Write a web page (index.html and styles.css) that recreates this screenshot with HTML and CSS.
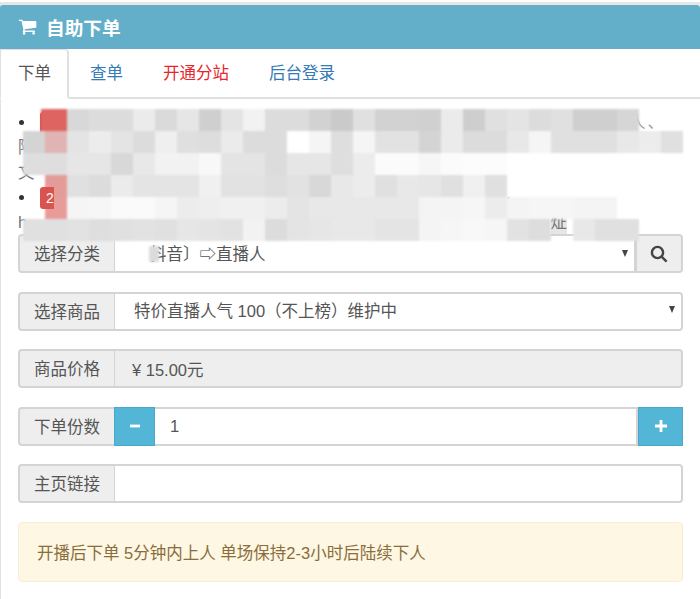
FILE: index.html
```html
<!DOCTYPE html>
<html lang="zh-CN">
<head>
<meta charset="utf-8">
<title>自助下单</title>
<link rel="stylesheet" href="styles.css">
</head>
<body>
<main class="panel">
  <h1 class="panel-heading">
    <svg class="cart" viewBox="0 0 1792 1792" aria-hidden="true"><path d="M704 1536q0 52-38 90t-90 38-90-38-38-90 38-90 90-38 90 38 38 90zm896 0q0 52-38 90t-90 38-90-38-38-90 38-90 90-38 90 38 38 90zm128-1088v512q0 24-16.5 42.5t-40.5 21.5l-1044 122q13 60 13 70 0 16-24 64h920q26 0 45 19t19 45-19 45-45 19h-1024q-26 0-45-19t-19-45q0-11 8-31.5t16-36 21.5-40 15.5-29.5l-177-823h-204q-26 0-45-19t-19-45 19-45 45-19h256q16 0 28.5 6.5t19.5 15.5 13 24.5 8 26 5.5 29.5 4.5 26h1201q26 0 45 19t19 45z"/></svg>
    <span>自助下单</span>
  </h1>
  <nav class="tabs">
    <a class="tab tab-active">下单</a>
    <a class="tab">查单</a>
    <a class="tab tab-red">开通分站</a>
    <a class="tab">后台登录</a>
  </nav>
  <section class="notice">
    <div class="line"><span class="bullet"></span><span class="badge">1</span><span class="grow"></span><span class="end-a">人、</span></div>
    <div class="line"><span>陆</span></div>
    <div class="line"><span>文</span></div>
    <div class="line"><span class="bullet"></span><span class="badge badge-top">2</span><span class="colon">:</span></div>
    <div class="line"><span>h</span><span class="grow"></span><span class="end-b">炡</span></div>
    <svg class="mosaic" viewBox="0 100 700 170" aria-hidden="true">
      <g>
        <rect x="44" y="110" fill="#dd6460"/><rect x="66" y="110" fill="#d8d8d8"/><rect x="88" y="110" fill="#dcdcdc"/><rect x="110" y="110" fill="#dcdcdc"/><rect x="132" y="110" fill="#ebebeb"/><rect x="154" y="110" fill="#dadada"/><rect x="176" y="110" fill="#e6e6e6"/><rect x="198" y="110" fill="#cfcfcf"/><rect x="220" y="110" fill="#e4e4e4"/><rect x="242" y="110" fill="#f2f2f2"/><rect x="264" y="110" fill="#dcdcdc"/><rect x="286" y="110" fill="#dcdcdc"/><rect x="308" y="110" fill="#d2d2d2"/><rect x="330" y="110" fill="#cacaca"/><rect x="352" y="110" fill="#e0e0e0"/><rect x="374" y="110" fill="#d2d2d2"/><rect x="396" y="110" fill="#d2d2d2"/><rect x="418" y="110" fill="#d0d0d0"/><rect x="440" y="110" fill="#ebebeb"/><rect x="462" y="110" fill="#cecece"/><rect x="484" y="110" fill="#e0e0e0"/><rect x="506" y="110" fill="#e4e4e4"/><rect x="528" y="110" fill="#dcdcdc"/><rect x="550" y="110" fill="#e0e0e0"/><rect x="572" y="110" fill="#cfcfcf"/><rect x="594" y="110" fill="#cfcfcf"/><rect x="616" y="110" fill="#d6d6d6"/>
      </g>
      <g>
        <rect x="22" y="132" fill="#d4d4d4"/><rect x="44" y="132" fill="#e0b4b2"/><rect x="66" y="132" fill="#e4e4e4"/><rect x="88" y="132" fill="#ececec"/><rect x="110" y="132" fill="#e4e4e4"/><rect x="132" y="132" fill="#dcdcdc"/><rect x="154" y="132" fill="#efefef"/><rect x="176" y="132" fill="#dfdfdf"/><rect x="198" y="132" fill="#dddddd"/><rect x="220" y="132" fill="#ebebeb"/><rect x="242" y="132" fill="#dcdcdc"/><rect x="264" y="132" fill="#dcdcdc"/><rect x="286" y="132" fill="#ffffff"/><rect x="308" y="132" fill="#f5f5f5"/><rect x="330" y="132" fill="#dedede"/><rect x="352" y="132" fill="#f5f5f5"/><rect x="374" y="132" fill="#e2e2e2"/><rect x="396" y="132" fill="#e2e2e2"/><rect x="418" y="132" fill="#d4d4d4"/><rect x="440" y="132" fill="#ebebeb"/><rect x="462" y="132" fill="#dcdcdc"/><rect x="484" y="132" fill="#dcdcdc"/><rect x="506" y="132" fill="#e8e8e8"/><rect x="528" y="132" fill="#f5f5f5"/><rect x="550" y="132" fill="#e0e0e0"/><rect x="572" y="132" fill="#e0e0e0"/><rect x="594" y="132" fill="#e0e0e0"/><rect x="616" y="132" fill="#e8e8e8"/><rect x="638" y="132" fill="#ececec"/><rect x="660" y="132" fill="#e0e0e0"/>
      </g>
      <g>
        <rect x="22" y="154" fill="#dedede"/><rect x="44" y="154" fill="#dedede"/><rect x="66" y="154" fill="#e6e6e6"/><rect x="88" y="154" fill="#e6e6e6"/><rect x="110" y="154" fill="#d8d8d8"/><rect x="132" y="154" fill="#e8e8e8"/><rect x="154" y="154" fill="#f2f2f2"/><rect x="176" y="154" fill="#f2f2f2"/><rect x="198" y="154" fill="#f8f8f8"/><rect x="220" y="154" fill="#e4e4e4"/><rect x="242" y="154" fill="#e4e4e4"/><rect x="264" y="154" fill="#dcdcdc"/><rect x="286" y="154" fill="#e6e6e6"/><rect x="308" y="154" fill="#e6e6e6"/><rect x="330" y="154" fill="#dedede"/><rect x="352" y="154" fill="#ececec"/><rect x="374" y="154" fill="#fbfbfb"/><rect x="396" y="154" fill="#fbfbfb"/><rect x="418" y="154" fill="#f6f6f6"/><rect x="440" y="154" fill="#fbfbfb"/><rect x="462" y="154" fill="#fcfcfc"/><rect x="484" y="154" fill="#fcfcfc"/>
      </g>
      <g>
        <rect x="44" y="176" fill="#e49c98"/><rect x="66" y="176" fill="#e0e0e0"/><rect x="88" y="176" fill="#dcdcdc"/><rect x="110" y="176" fill="#ebebeb"/><rect x="132" y="176" fill="#e4e4e4"/><rect x="154" y="176" fill="#e4e4e4"/><rect x="176" y="176" fill="#e4e4e4"/><rect x="198" y="176" fill="#f0f0f0"/><rect x="220" y="176" fill="#e2e2e2"/><rect x="242" y="176" fill="#e2e2e2"/><rect x="264" y="176" fill="#dedede"/><rect x="286" y="176" fill="#e2e2e2"/><rect x="308" y="176" fill="#d8d8d8"/><rect x="330" y="176" fill="#e8e8e8"/><rect x="352" y="176" fill="#ececec"/><rect x="374" y="176" fill="#e0e0e0"/><rect x="396" y="176" fill="#e8e8e8"/><rect x="418" y="176" fill="#e6e6e6"/><rect x="440" y="176" fill="#e0e0e0"/><rect x="462" y="176" fill="#f0f0f0"/><rect x="484" y="176" fill="#e0e0e0"/>
      </g>
      <g>
        <rect x="44" y="198" fill="#e89c9a"/><rect x="66" y="198" fill="#f5f5f5"/><rect x="88" y="198" fill="#f6f6f6"/><rect x="110" y="198" fill="#fafafa"/><rect x="132" y="198" fill="#fafafa"/><rect x="154" y="198" fill="#f5f5f5"/><rect x="176" y="198" fill="#ececec"/><rect x="198" y="198" fill="#eeeeee"/><rect x="220" y="198" fill="#f0f0f0"/><rect x="242" y="198" fill="#f0f0f0"/><rect x="264" y="198" fill="#ececec"/><rect x="286" y="198" fill="#e4e4e4"/><rect x="308" y="198" fill="#e8e8e8"/><rect x="330" y="198" fill="#e8e8e8"/><rect x="352" y="198" fill="#e8e8e8"/><rect x="374" y="198" fill="#e8e8e8"/><rect x="396" y="198" fill="#e8e8e8"/><rect x="418" y="198" fill="#f4f4f4"/><rect x="440" y="198" fill="#f4f4f4"/><rect x="462" y="198" fill="#f6f6f6"/><rect x="484" y="198" fill="#ececec"/><rect x="506" y="198" fill="#f4f4f4"/><rect x="528" y="198" fill="#f6f6f6"/><rect x="550" y="198" fill="#f6f6f6"/><rect x="572" y="198" fill="#f4f4f4"/><rect x="594" y="198" fill="#f4f4f4"/>
      </g>
      <g>
        <rect x="22" y="220" fill="#e0e0e0"/><rect x="44" y="220" fill="#e0e0e0"/><rect x="66" y="220" fill="#e2e2e2"/><rect x="88" y="220" fill="#dedede"/><rect x="110" y="220" fill="#e0e0e0"/><rect x="132" y="220" fill="#e2e2e2"/><rect x="154" y="220" fill="#e0e0e0"/><rect x="176" y="220" fill="#e6e6e6"/><rect x="198" y="220" fill="#e4e4e4"/><rect x="220" y="220" fill="#e2e2e2"/><rect x="242" y="220" fill="#f2f2f2"/><rect x="264" y="220" fill="#dcdcdc"/><rect x="286" y="220" fill="#e4e4e4"/><rect x="308" y="220" fill="#e6e6e6"/><rect x="330" y="220" fill="#e8e8e8"/><rect x="352" y="220" fill="#e8e8e8"/><rect x="374" y="220" fill="#e4e4e4"/><rect x="396" y="220" fill="#e4e4e4"/><rect x="418" y="220" fill="#f4f4f4"/><rect x="440" y="220" fill="#f6f6f6"/><rect x="462" y="220" fill="#f8f8f8"/><rect x="484" y="220" fill="#f6f6f6"/><rect x="506" y="220" fill="#e2e2e2"/><rect x="528" y="220" fill="#dddddd"/><rect x="572" y="220" fill="#e8e8e8"/><rect x="594" y="220" fill="#e0e0e0"/><rect x="616" y="220" fill="#e0e0e0"/>
      </g>
      <path class="patch-red" d="M40 110h5v22h-5z"/>
      <path class="patch-white" d="M118 242h32v22h-32zM266 242h20v22h-20z"/>
      <path class="patch-gray" d="M148 247h10v16h-10z"/>
    </svg>
  </section>
  <form class="order">
    <div class="field">
      <label class="addon">选择分类</label>
      <div class="select-wrap">
        <select class="control control-category"><option>抖音〕⇨直播人</option></select>
      </div>
      <button type="button" class="search" aria-label="搜索">
        <svg viewBox="0 0 18 18" aria-hidden="true"><circle cx="7.5" cy="7.5" r="5.6"/><path d="M11.6 11.6l5 5"/></svg>
      </button>
    </div>
    <div class="field">
      <label class="addon">选择商品</label>
      <div class="select-wrap select-last">
        <select class="control"><option>特价直播人气 100（不上榜）维护中</option></select>
      </div>
    </div>
    <div class="field">
      <label class="addon">商品价格</label>
      <input class="control control-last control-readonly" value="¥ 15.00元" readonly>
    </div>
    <div class="field">
      <label class="addon addon-flat">下单份数</label>
      <button type="button" class="step step-minus" aria-label="减少"><svg viewBox="0 0 12 12" aria-hidden="true"><path d="M1 4.6h10v2.8H1z"/></svg></button>
      <input class="control control-count" value="1">
      <button type="button" class="step step-plus" aria-label="增加"><svg viewBox="0 0 12 12" aria-hidden="true"><path d="M4.6 0h2.8v4.6H12v2.8H7.4V12H4.6V7.4H0V4.6h4.6z"/></svg></button>
    </div>
    <div class="field">
      <label class="addon">主页链接</label>
      <input class="control control-last">
    </div>
    <div class="alert">开播后下单 5分钟内上人 单场保持2-3小时后陆续下人</div>
  </form>
</main>
</body>
</html>
```

FILE: styles.css
```css
* { box-sizing: border-box; }
html, body { margin: 0; height: 100%; background: #fff; }
body {
  font-family: "Liberation Sans", "Noto Sans CJK SC", sans-serif;
  font-size: 16.5px;
  color: #555;
  overflow: hidden;
  padding-top: 2px;
}
.panel {
  border-top: 3px solid #e6e6e6;
  border-left: 1px solid #e2e2e2;
  min-height: 597px;
}
.panel-heading {
  margin: 0 0 0 -1px;
  height: 44px;
  display: flex;
  align-items: center;
  gap: 9px;
  padding: 0 0 2px 18px;
  background: #63afc9;
  color: #fff;
  font-size: 18.7px;
  font-weight: 700;
  border-radius: 3px 3px 0 0;
}
.cart { width: 19px; height: 19px; fill: #fff; }
.tabs {
  display: flex;
  height: 50px;
  border-bottom: 2px solid #e0e0e0;
}
.tab {
  display: flex;
  align-items: center;
  padding: 0 20px 4px;
  color: #337ab7;
  margin-bottom: -2px;
  height: 50px;
}
.tab-active {
  color: #555;
  width: 69px;
  padding: 0 0 4px 17px;
  margin-left: -1px;
  margin-right: 1px;
  background: #fff;
  border: 1px solid #e0e0e0;
  border-width: 1px 2px 0 1px;
  border-bottom: 2px solid #fff;
  border-radius: 3px 4px 0 0;
}
.tab-red { color: #e8262c; }
.notice {
  position: relative;
  padding: 11px 17px 0;
  height: 135px;
  color: #777;
}
.line {
  display: flex;
  align-items: center;
  height: 25px;
  line-height: 25px;
}
.bullet {
  width: 5px;
  height: 5px;
  border-radius: 50%;
  background: #333;
  margin: 0 16px 0 1px;
}
.badge {
  width: 26px;
  height: 22px;
  line-height: 22px;
  text-align: center;
  background: #d9534f;
  color: #fff;
  font-size: 14px;
  border-radius: 3px 0 0 3px;
}
.badge-top {
  position: relative;
  z-index: 3;
  width: 14px;
  padding-left: 6px;
  text-align: left;
}
.grow { flex: 1; }
.end-a { margin-right: 17px; color: #999; letter-spacing: 2px; }
.end-b { margin-right: 116px; background: #e6e6e6; }
.colon { margin-left: 452px; position: relative; top: 3px; }
.mosaic {
  position: absolute;
  z-index: 2;
  left: 0;
  top: 0;
  width: 700px;
  height: 170px;
  pointer-events: none;
  filter: blur(0.8px);
}
.mosaic rect { width: 22px; height: 22px; }
.patch-red { fill: #dd6460; }
.patch-white { fill: #fff; }
.patch-gray { fill: #dcdcdc; }
.order {
  display: flex;
  flex-direction: column;
  gap: 18.5px;
  padding: 0 17px 0 17px;
}
.field {
  display: flex;
  height: 39px;
}
.addon {
  flex: none;
  width: 97px;
  display: flex;
  align-items: center;
  justify-content: center;
  background: #eee;
  border: 2px solid #d4d4d4;
  border-right-width: 1px;
  border-radius: 4px 0 0 4px;
  padding-bottom: 1px;
}
.addon-flat { width: 96px; border-right: 0; }
.control {
  flex: 1;
  min-width: 0;
  width: 100%;
  height: 100%;
  padding: 0 17px 0 19px;
  font: inherit;
  color: #555;
  background: #fff;
  border: 2px solid #d4d4d4;
  border-left: 0;
  border-radius: 0;
  outline: 0;
  appearance: none;
}
.control-category { padding-left: 35px; }
.control-last { border-radius: 0 4px 4px 0; padding-left: 18px; }
.control-readonly { background: #eee; padding-left: 17px; }
.control-count { padding-left: 15px; }
.select-wrap { position: relative; flex: 1; min-width: 0; }
.select-wrap::after {
  content: "";
  position: absolute;
  right: 8px;
  top: 16px;
  border: 3.5px solid transparent;
  border-top: 7px solid #444;
  border-bottom: 0;
}
.select-last::after { top: 14px; }
.select-last .control { border-radius: 0 4px 4px 0; }
.search {
  flex: none;
  width: 47px;
  padding: 0;
  display: flex;
  align-items: center;
  justify-content: center;
  background: #eee;
  border: 2px solid #d4d4d4;
  border-left-width: 1px;
  border-radius: 0 4px 4px 0;
}
.search svg { width: 18px; height: 18px; fill: none; stroke: #444; stroke-width: 2.4; }
.step {
  flex: none;
  padding: 0;
  display: flex;
  align-items: center;
  justify-content: center;
  background: #54b6d7;
  border: 1px solid #4aa8cc;
}
.step svg { width: 12px; height: 12px; fill: #fff; }
.step-minus { width: 41px; }
.step-plus { width: 45px; }
.alert {
  height: 60px;
  margin-top: 0.5px;
  display: flex;
  align-items: center;
  padding-left: 18px;
  background: #fdf7e3;
  border: 1px solid #faecd0;
  border-radius: 4px;
  color: #8a6d3b;
}
```
